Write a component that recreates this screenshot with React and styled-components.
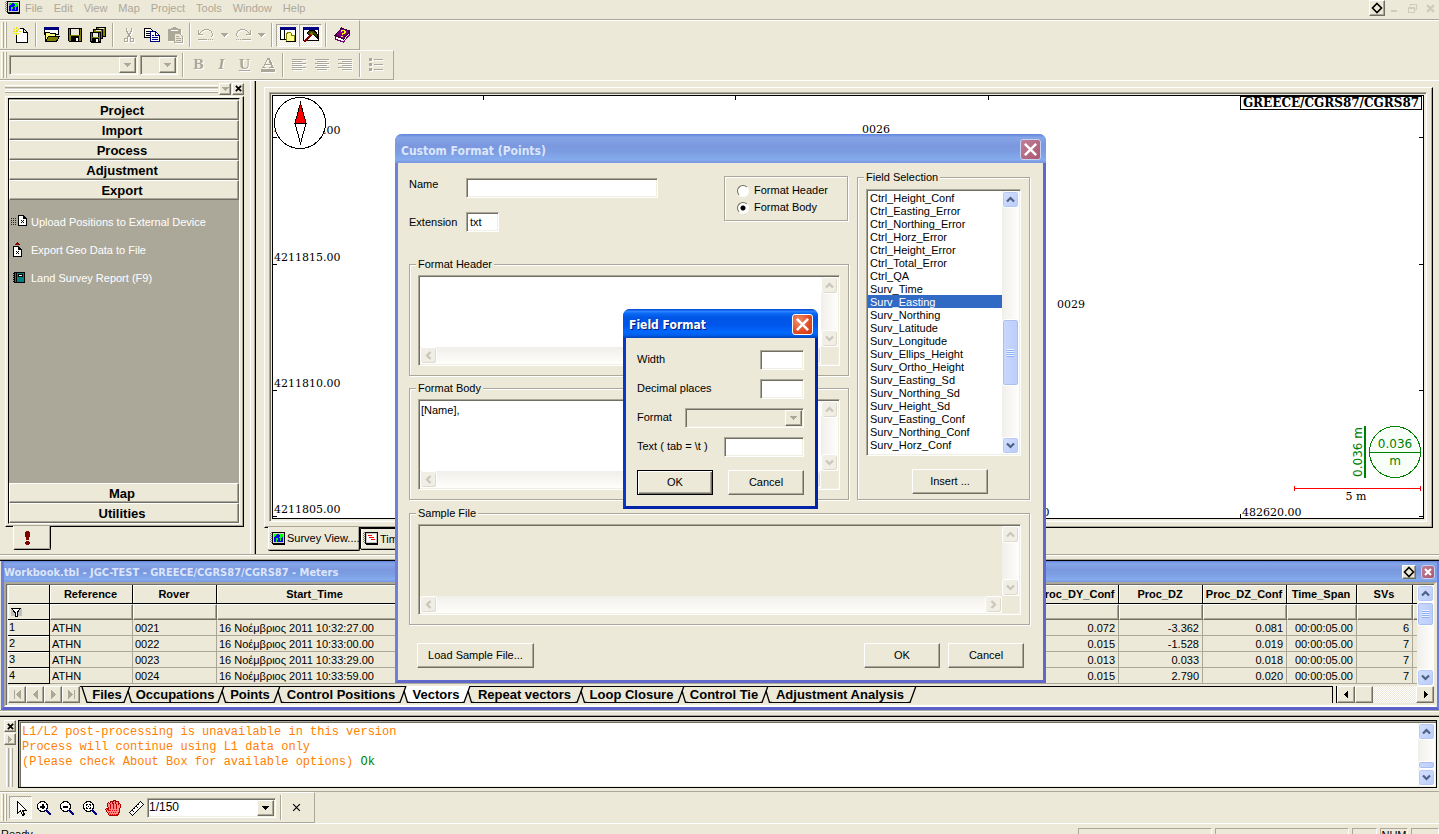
import React from "react";
import styled, { createGlobalStyle, css } from "styled-components";

const face = "#ece9d8";
const shade = "#aca899";
const dark = "#716f64";
const ui = '"Liberation Sans", Arial, sans-serif';
const caption = '"DejaVu Sans Condensed", "DejaVu Sans", sans-serif';

const raised = css`
  border: 1px solid;
  border-color: #fff ${dark} ${dark} #fff;
  box-shadow: inset -1px -1px 0 ${shade};
`;
const sunken = css`
  border: 1px solid;
  border-color: ${shade} #fff #fff ${shade};
  box-shadow: inset 1px 1px 0 ${dark}, inset -1px -1px 0 #f1efe2;
`;
const etched = css`
  border: 1px solid ${shade};
  box-shadow: 1px 1px 0 #fff, inset 1px 1px 0 #fff;
`;
const dither = css`
  background: repeating-conic-gradient(#fff 0 25%, ${face} 0 50%) 0 0 / 2px 2px;
`;

const GlobalStyle = createGlobalStyle`
  *, *::before, *::after { box-sizing: border-box; }
  html, body { margin: 0; height: 100%; overflow: hidden; background: ${face}; }
  body, button, input, select, textarea { font: 11px/13px ${ui}; color: #000; }
  button, input, select, textarea { margin: 0; padding: 0; border-radius: 0; outline: 0; }
  button { background: ${face}; border: 0; }
  ul { list-style: none; margin: 0; padding: 0; }
  svg { display: block; flex: none; }
`;

/* ---------- application shell ---------- */

const Shell = styled.div`
  height: 100vh;
  display: flex;
  flex-direction: column;
  background: ${face};
`;

const MenuBar = styled.header`
  flex: none;
  height: 20px;
  padding-left: 5px;
  display: flex;
  align-items: flex-start;
  border-bottom: 1px solid ${shade};
  box-shadow: 0 1px 0 #fff;
`;

const MenuList = styled.nav`
  display: flex;
  gap: 11px;
  margin-left: 4px;
  flex: 1;
`;

const MenuItem = styled.button`
  height: 16px;
  color: ${shade};
`;

const DocButtons = styled.div`
  display: flex;
`;

const PinButton = styled.button`
  ${raised}
  width: ${(p) => p.$size || 16}px;
  height: ${(p) => p.$size || 16}px;
  display: grid;
  place-items: center;
`;

const GhostButton = styled.button`
  width: 18px;
  height: 16px;
  display: grid;
  place-items: center;
`;

/* ---------- tool bars ---------- */

const ToolBar = styled.div`
  align-self: flex-start;
  flex: none;
  height: ${(p) => p.$height || 29}px;
  padding: 0 6px 0 1px;
  display: flex;
  align-items: center;
  border-right: 1px solid ${shade};
  border-bottom: 1px solid ${shade};
  border-top: 1px solid #fff;
`;

const Grip = styled.span`
  align-self: stretch;
  width: 6px;
  margin: 1px 2px 1px 0;
  border: solid #fff;
  border-width: 0 0 0 1px;
  background: linear-gradient(90deg, ${face} 1px, ${shade} 1px 2px, ${face} 2px 3px, #fff 3px 4px, ${face} 4px 5px);
  box-shadow: inset -1px 0 0 ${shade};
`;

const ToolButton = styled.button`
  width: 23px;
  height: 23px;
  display: grid;
  place-items: center;
  ${(p) =>
    p.$on &&
    css`
      ${dither}
      border: 1px solid;
      border-color: ${shade} #fff #fff ${shade};
    `}
  ${(p) =>
    p.$off &&
    css`
      color: ${shade};
      svg,
      span {
        filter: drop-shadow(1px 1px 0 #fff);
      }
    `}
`;

const DropButton = styled(ToolButton)`
  width: 14px;
`;

const Glyph = styled.span`
  font: ${(p) => (p.$italic ? "italic " : "")}bold 13px/16px "DejaVu Serif", serif;
  text-decoration: ${(p) => (p.$under ? "underline" : "none")};
`;

const Divider = styled.span`
  align-self: stretch;
  width: 8px;
  margin: 2px 0;
  background: linear-gradient(90deg, ${face} 3px, ${shade} 3px 4px, #fff 4px 5px, ${face} 5px);
`;

const ComboBox = styled.span`
  ${sunken}
  display: flex;
  flex: none;
  width: ${(p) => p.$width}px;
  height: ${(p) => p.$height || 20}px;
  margin-right: ${(p) => p.$gap || 0}px;
  padding: 1px;
  background: ${(p) => (p.$off ? face : "#fff")};
  select {
    flex: 1;
    min-width: 0;
    appearance: none;
    border: 0;
    background: transparent;
    font-size: 12px;
    opacity: 1;
    color: #000;
  }
`;

const ComboArrow = styled.span`
  ${raised}
  width: 17px;
  display: grid;
  place-items: center;
  background: ${face};
  color: ${(p) => (p.$off ? shade : "#000")};
`;

const Combo = ({ label, width, height, gap, off, value }) => (
  <ComboBox $width={width} $height={height} $gap={gap} $off={off}>
    <select aria-label={label} disabled={off}>
      <option>{value}</option>
    </select>
    <ComboArrow $off={off}>
      <DownTriangle />
    </ComboArrow>
  </ComboBox>
);

/* ---------- icons ---------- */

const Art = ({ w = 16, h = 16, children }) => (
  <svg width={w} height={h} viewBox={`0 0 ${w} ${h}`} shapeRendering="crispEdges" fill="none" aria-hidden="true">
    {children}
  </svg>
);

const DownTriangle = () => (
  <Art w={7} h={4}>
    <path d="M0 0h7v1H6v1H5v1H4v1H3V3H2V2H1V1H0z" fill="currentColor" />
  </Art>
);

const GlobeIcon = () => (
  <Art>
    <path d="M0 2h1v1H0zM0 4h1v1H0zM0 6h1v1H0zM0 8h1v1H0zM0 10h1v1H0zM1 1h1v1H1zM1 3h1v1H1zM1 5h1v1H1zM1 7h1v1H1zM1 9h1v1H1zM1 11h1v1H1z" fill="#808080" />
    <path d="M2 1h13v13H3v-1H2z" fill="#000" />
    <path d="M3 2h11v10H3z" fill="#d4d0c8" />
    <path d="M4 3h9v8H4z" fill="#00f" />
    <path d="M4 3h3v1H6v1H5v1H4zM9 3h4v3h-1v1h-1v3h-1V7H9V6h1V4H9zM6 7h2v2H7v2H6z" fill="#0f0" />
  </Art>
);

const PlanIcon = () => (
  <Art>
    <path d="M0 2h1v1H0zM0 4h1v1H0zM0 6h1v1H0zM0 8h1v1H0zM0 10h1v1H0zM1 1h1v1H1zM1 3h1v1H1zM1 5h1v1H1zM1 7h1v1H1zM1 9h1v1H1zM1 11h1v1H1z" fill="#808080" />
    <path d="M2 1h13v13H3v-1H2z" fill="#000" />
    <path d="M3 2h11v10H3z" fill="#c8c4bc" />
    <path d="M4 3h9v8H4z" fill="#fff" />
    <path d="M5 4h4v1H5zM6 6h5v1H6zM8 8h4v1H8z" fill="#f00" />
  </Art>
);

const NewIcon = () => (
  <Art>
    <path d="M3 8l4-6h3v4h4v9H4z" fill="#fff" />
    <path d="M3.500 8v7.500h11V5.500l-4-4H7" stroke="#000" />
    <path d="M10.500 1.500v4h4" stroke="#000" />
    <path d="M0 1h1v1H0zM1 2h1v1H1zM3 0h1v2H3zM6 1h1v1H6zM5 2h1v1H5zM0 4h2v1H0zM3 3h2v2H3zM6 4h2v1H6zM1 6h1v1H1zM3 6h1v2H3zM5 6h1v1H5z" fill="#e8e000" />
  </Art>
);

const OpenIcon = () => (
  <Art>
    <path d="M.5.500h14v7H.500z" fill="#fff" stroke="#000" />
    <path d="M0 0h15v3H0z" fill="#000080" />
    <path d="M1.500 14.500V5.500h4l1 1h5v3" fill="#ffff80" stroke="#000" />
    <path d="M1.500 14.500l3-5h11l-3 5z" fill="#808000" stroke="#000" />
  </Art>
);

const SaveIcon = () => (
  <Art>
    <path d="M1 1h14v14H2l-1-1z" fill="#000" />
    <path d="M2 2h1v12H2zM13 3h1v11h-1zM3 8h10v1H3zM3 9h1v5H3zM12 9h1v5h-1zM13 2h1v1h-1z" fill="#808000" />
    <path d="M4 2h8v6H4z" fill={face} />
    <path d="M9 11h2v3H9z" fill="#fff" />
  </Art>
);

const SaveAllIcon = () => (
  <Art>
    <path d="M6 0h10v10H6z" fill="#000" />
    <path d="M7 1h8v8H7z" fill="#808000" />
    <path d="M9 1h5v1H9z" fill={face} />
    <path d="M3 2h10v10H3z" fill="#000" />
    <path d="M4 3h8v8H4z" fill="#808000" />
    <path d="M6 3h5v1H6z" fill={face} />
    <path d="M0 5h11v11H1l-1-1z" fill="#000" />
    <path d="M1 6h1v8H1zM9 6h1v8H9zM2 10h7v1H2z" fill="#808000" />
    <path d="M3 6h5v4H3z" fill={face} />
    <path d="M6 12h2v3H6z" fill="#fff" />
  </Art>
);

const CutIcon = () => (
  <Art>
    <path d="M5 1h1v4H5zM10 1h1v4h-1zM6 4h1v3H6zM9 4h1v3H9zM7 6h2v4H7zM6 9h1v2H6zM9 9h1v2H9z" fill="currentColor" />
    <path d="M3.500 11.500h3v3h-3zM9.500 11.500h3v3h-3z" stroke="currentColor" />
  </Art>
);

const CopyIcon = () => (
  <Art>
    <path d="M.5 1.500h6l3 3v6H.500z" fill="#fff" stroke="#000" />
    <path d="M2 4h4v1H2zM2 6h5v1H2zM2 8h4v1H2z" fill="#000" />
    <path d="M6.500 4.500h5l4 4v6h-9z" fill="#fff" stroke="#000080" />
    <path d="M8 8h2v1H8zM8 10h6v1H8zM8 12h6v1H8z" fill="#000080" />
    <path d="M11.500 5v3.500H15" stroke="#000080" />
  </Art>
);

const PasteIcon = () => (
  <Art>
    <path d="M1 2h3V1h2V0h3v1h2v1h3v12H1z" fill="currentColor" />
    <path d="M4 3h7v1H4z" fill="#fff" />
    <path d="M7.500 6.500h5l3 3v6h-8z" fill={face} stroke="currentColor" />
    <path d="M9 9h3v1H9zM9 11h5v1H9zM9 13h5v1H9z" fill="currentColor" />
  </Art>
);

const UndoIcon = ({ flip }) => (
  <Art>
    <g transform={flip ? "translate(16 0) scale(-1 1)" : undefined}>
      <path d="M0 3h1v4h4v1H0zM1 6h1v1H1zM2 5h1v1H2zM3 4h1v1H3zM4 3h2v1H4zM6 2h5v1H6zM11 3h2v1h-2zM13 4h1v2h-1zM14 6h1v3h-1zM13 9h1v1h-1zM0 12h9v1H0zM10 12h1v1h-1zM12 12h1v1h-1zM14 12h1v1h-1z" fill="currentColor" />
    </g>
  </Art>
);

const BrowserPanelIcon = () => (
  <Art>
    <path d="M.500.500h15v12H.500z" fill="#fff" stroke="#000" />
    <path d="M0 0h16v3H0z" fill="#000080" />
    <path d="M4 3h1v10H4z" fill="#000" />
    <path d="M6.500 13.500v-7h1v-1h3l1 1v2h3v6h-8z" fill="#ffff90" stroke="#808000" />
    <path d="M6 14h10v1H6zM15 8h1v7h-1z" fill="#000" />
  </Art>
);

const HammerIcon = () => (
  <Art>
    <path d="M.500.500h15v13H.500z" fill="#fff" stroke="#000" />
    <path d="M0 0h16v3H0z" fill="#000080" />
    <path d="M4 6l3-3h4l3 4v4l-4-4-3 2z" fill="#404000" stroke="#000" />
    <path d="M9 7l-8 8" stroke="#800000" strokeWidth="2" />
    <path d="M8 6l2 2" stroke="#808000" strokeWidth="2" />
  </Art>
);

const HelpBookIcon = () => (
  <Art>
    <path d="M1 8.500L7.500 1l8 3-6 7.500z" fill="#800080" stroke="#400040" />
    <path d="M1 9l8.500 3 6-7.500v3l-6 7.500L1 12z" fill="#fff" stroke="#400040" />
    <path d="M1.500 12.500l8 2.500 6-7" stroke="#800080" />
    <path d="M7 3h4v1h1v2h-1v1H9v1H8V6h2V4H8v1H7zM7 9h2v1H7z" fill="#ff0" />
  </Art>
);

const AlignIcon = ({ lines }) => (
  <Art>
    {lines.map(([x, w], i) => (
      <rect key={i} x={x} y={2 + i * 2} width={w} height="1" fill="currentColor" />
    ))}
  </Art>
);

const BulletIcon = () => (
  <Art>
    <path d="M1 1h3v3H1zM1 6h3v3H1zM1 11h3v3H1zM6 2h9v1H6zM6 7h9v1H6zM6 12h9v1H6z" fill="currentColor" />
  </Art>
);

const FontColorIcon = () => (
  <Art>
    <path d="M8 1L3.500 10M5 7h6M2 10.500h4M9 10.500h5" stroke="currentColor" />
    <path d="M8 1l4 9M9 1l4 9" stroke="currentColor" />
    <path d="M1 12h14v3H1z" fill="currentColor" />
  </Art>
);

const PointerIcon = () => (
  <Art>
    <path d="M4.500 1.500v12l3-3 2 5 2-1-2-4h4z" fill="#fff" stroke="#000" />
  </Art>
);

const LensIcon = ({ kind }) => (
  <Art>
    <circle cx="6.500" cy="6.500" r="5" stroke="#000" fill="#fff" />
    <path d="M10 10l5 5" stroke="#000080" strokeWidth="2" />
    {kind !== "fit" && <path d="M4 6h5v1.500H4z" fill="#000" />}
    {kind === "in" && <path d="M6 4h1.500v5H6z" fill="#000" />}
    {kind === "fit" && <path d="M4 4h2v1H5v1H4zM7 4h2v2H8V5H7zM4 7h1v1h1v1H4zM8 7h1v2H7V8h1zM6 6h1v1H6z" fill="#000" />}
  </Art>
);

const HandIcon = () => (
  <Art>
    <path d="M4.500 15.500L.500 9.500l1-1 2 1-1-6 1-1 1.500 1 .5-2.500h1.500L7.500 3 8.500.500h1.500L10.500 3l1-1.500h1.500v3l1-1 1.500 1-1 7-2 4z" fill="#f88" stroke="#a00" />
    <path d="M5 4v5M8 3v6M11 4v5M4 11l2-1" stroke="#c00" />
    <path d="M4 12h8M3 10h10M5 14h7" stroke="#e00" strokeDasharray="1 1" />
  </Art>
);

const RulerIcon = () => (
  <Art>
    <path d="M1.500 12.500l11-11 3 3-11 11z" fill="#fff" stroke="#000" />
    <path d="M4 10l2 2M6 8l1 1M8 6l2 2M10 4l1 1" stroke="#000" />
  </Art>
);

const UploadIcon = () => (
  <Art>
    <path d="M0 4h1v1H0zM2 4h1v1H2zM4 4h1v1H4zM0 6h1v1H0zM2 6h1v1H2zM4 6h1v1H4zM0 8h1v1H0zM2 8h1v1H2zM4 8h1v1H4zM0 10h1v1H0zM2 10h1v1H2zM4 10h1v1H4z" fill="#800000" />
    <path d="M7.500 1.500h5l3 3v7h-8z" fill="#fff" stroke="#000" />
    <path d="M12 2v3h3M10 6h1v1h1V6h1v1h-1v1h1v1h-1V8h-1v1h-1V8h1V7h-1z" fill="#000" />
  </Art>
);

const ExportIcon = () => (
  <Art>
    <path d="M6 0h1v1h1v1h1v1H4V2h1V1h1z" fill="#800000" />
    <path d="M2.500 4.500h5l3 3v7h-8z" fill="#fff" stroke="#000" />
    <path d="M7 5v3h3M5 9h1v1h1V9h1v1H7v1h1v1H7v-1H6v1H5v-1h1v-1H5z" fill="#000" />
  </Art>
);

const ReportIcon = () => (
  <Art>
    <path d="M3.500 2.500h10v10h-10z" fill="#008080" stroke="#000" />
    <path d="M2 3h1v1H2zM2 5h1v1H2zM2 7h1v1H2zM2 9h1v1H2zM2 11h1v1H2zM5 3h1v9H5z" fill="#000" />
    <path d="M7 4h5v3H7z" fill="#000" />
    <path d="M8 5h3v1H8z" fill="#fff" />
  </Art>
);

const FilterIcon = () => (
  <Art w={13} h={10}>
    <path d="M1 1h11v8H1z" fill="#c0c0c0" />
    <path d="M1.500 1.500h9l-3.500 4v4h-2v-4z" fill="#fff" stroke="#000" />
  </Art>
);

const CrossIcon = ({ size = 8, color = "#000", weight = 2 }) => (
  <svg width={size} height={size} viewBox="0 0 8 8" aria-hidden="true">
    <path d="M1 1l6 6M7 1l-6 6" stroke={color} strokeWidth={weight} />
  </svg>
);

const DiamondIcon = () => (
  <svg width="12" height="12" viewBox="0 0 12 12" fill="none" aria-hidden="true">
    <path d="M6 1.500L10.500 6 6 10.500 1.500 6z" stroke="#000" strokeWidth="1.600" />
  </svg>
);

/* ---------- scroll bars ---------- */

const turns = { up: 0, right: 90, down: 180, left: 270 };

const Chevron = ({ to }) => (
  <svg width="9" height="9" viewBox="0 0 9 9" fill="none" aria-hidden="true">
    <path d="M1 6.500L4.500 3 8 6.500" stroke="currentColor" strokeWidth="2.200" transform={`rotate(${turns[to]} 4.500 4.500)`} />
  </svg>
);

const Track = styled.div`
  flex: none;
  display: flex;
  flex-direction: ${(p) => (p.$flat ? "row" : "column")};
  ${(p) => (p.$flat ? "height: 17px;" : "width: 17px;")}
  background: linear-gradient(${(p) => (p.$flat ? "180deg" : "90deg")}, #f1efea, #fefefb);
`;

const Arrow = styled.button`
  flex: none;
  width: 17px;
  height: 17px;
  display: grid;
  place-items: center;
  border: 1px solid #fff;
  border-radius: 3px;
  ${(p) =>
    p.$off
      ? css`
          color: #c9c7ba;
          background: #f0eee5;
          box-shadow: inset -1px -1px 0 #dddacb;
        `
      : css`
          color: #4d6185;
          background: linear-gradient(135deg, #d6e1fe, #b8cbf8);
          box-shadow: inset 0 0 0 1px #b7c9f5;
        `}
`;

const Rest = styled.span`
  flex: ${(p) => p.$share} 1 0;
`;

const Thumb = styled.span`
  flex: none;
  height: ${(p) => p.$length}px;
  border: 1px solid #fff;
  border-radius: 3px;
  box-shadow: inset 0 0 0 1px #a9bff0;
  background: linear-gradient(90deg, #cad8fd, #bbcdfb);
  display: grid;
  place-items: center;
`;

const ThumbRidges = styled.i`
  width: 7px;
  height: 8px;
  background: repeating-linear-gradient(#eef4fe 0 1px, #8cb0f8 1px 2px);
`;

const VScroll = ({ off, before = 0, after = 1, thumb }) => (
  <Track>
    <Arrow type="button" $off={off} aria-label="Scroll up"><Chevron to="up" /></Arrow>
    <Rest $share={before} />
    {thumb && <Thumb $length={thumb}>{thumb > 12 && <ThumbRidges />}</Thumb>}
    <Rest $share={after} />
    <Arrow type="button" $off={off} aria-label="Scroll down"><Chevron to="down" /></Arrow>
  </Track>
);

const HScroll = () => (
  <Track $flat>
    <Arrow type="button" $off aria-label="Scroll left"><Chevron to="left" /></Arrow>
    <Rest $share={1} />
    <Arrow type="button" $off aria-label="Scroll right"><Chevron to="right" /></Arrow>
  </Track>
);

/* ---------- work area ---------- */

const Work = styled.main`
  flex: 1;
  min-height: 0;
  display: flex;
  border-top: 1px solid #fff;
`;

const Side = styled.aside`
  flex: none;
  width: 257px;
  padding: 1px 13px 0 5px;
  display: flex;
  flex-direction: column;
  background: linear-gradient(90deg, ${face} 250px, #fff 250px 251px, ${face} 251px 254px, ${shade} 254px 255px, #000 255px 256px, ${face} 256px);
`;

const SideHead = styled.div`
  display: flex;
  align-items: center;
  gap: 1px;
  height: 13px;
`;

const SideGrip = styled.span`
  flex: 1;
  height: 7px;
  border: solid #fff;
  border-width: 1px 0;
  background: linear-gradient(${face} 1px, ${shade} 1px 2px, #fff 3px 4px, ${face} 4px);
  box-shadow: 0 1px 0 ${shade};
`;

const TinyButton = styled.button`
  ${raised}
  width: 12px;
  height: 12px;
  display: grid;
  place-items: center;
  color: ${shade};
`;

const SidePanel = styled.div`
  flex: 1;
  min-height: 0;
  margin-top: 1px;
  padding: 1px 3px 2px 2px;
  display: flex;
  border: 1px solid;
  border-color: #fff #000 #000 #fff;
  box-shadow: inset -1px -1px 0 ${shade};
`;

const Drawers = styled.div`
  flex: 1;
  display: flex;
  flex-direction: column;
  border: 1px solid;
  border-color: #000 #fff #fff #000;
  background: ${shade};
  padding-top: 1px;
`;

const Drawer = styled.button`
  ${raised}
  flex: none;
  height: 20px;
  padding: 1px 4px 0 0;
  font-weight: bold;
  font-size: 13px;
  line-height: 16px;
`;

const DrawerBody = styled.ul`
  flex: 1;
  padding: 14px 0 0 2px;
`;

const DrawerLink = styled.a`
  display: flex;
  align-items: center;
  gap: 4px;
  height: 16px;
  margin-bottom: 12px;
  color: #fff;
  text-decoration: none;
`;

const SideTab = styled.button`
  flex: none;
  width: 38px;
  height: 24px;
  margin: -1px 0 4px 8px;
  padding-right: 10px;
  border: solid;
  border-width: 0 1px 1px;
  border-color: #000 #000 #000 #fff;
  border-radius: 0 0 2px 2px;
  box-shadow: inset -1px -1px 0 ${shade};
  display: grid;
  place-items: center;
`;

const ViewArea = styled.section`
  flex: 1;
  min-width: 0;
  display: flex;
  flex-direction: column;
  padding: 6px 6px 2px 7px;
`;

const ViewFrame = styled.div`
  flex: 1;
  min-height: 0;
  display: flex;
  padding: 4px 5px 5px 4px;
  border: 1px solid;
  border-color: #fff #000 #000 #fff;
  box-shadow: inset -1px -1px 0 ${shade};
`;

const ViewWell = styled.div`
  ${sunken}
  flex: 1;
  display: flex;
  padding: 2px;
`;

const MapCanvas = styled.div`
  position: relative;
  flex: 1;
  overflow: hidden;
  border: 1px solid #000;
  background: #fff;
`;

const MapLabel = styled.span`
  position: absolute;
  left: ${(p) => p.$x}px;
  top: ${(p) => p.$y}px;
  font: 11px/14px "DejaVu Serif", serif;
`;

const SideTick = styled.i`
  position: absolute;
  ${(p) => (p.$right ? "right: 0;" : "left: 0;")}
  top: ${(p) => p.$y}px;
  width: 4px;
  height: 1px;
  background: #000;
`;

const EdgeTick = styled.i`
  position: absolute;
  ${(p) => (p.$bottom ? "bottom: 0;" : "top: 0;")}
  left: ${(p) => p.$x}px;
  width: 1px;
  height: 4px;
  background: #000;
`;

const Compass = styled.div`
  position: absolute;
  left: 0;
  top: 0;
`;

const DatumTag = styled.div`
  position: absolute;
  right: 1px;
  top: 0;
  width: 182px;
  height: 14px;
  border: 1px solid #000;
  background: #fff;
  text-align: center;
  font: bold 12px/12px "DejaVu Serif", serif;
  white-space: nowrap;
`;

const ErrorLegend = styled.div`
  position: absolute;
  right: 1px;
  bottom: 13px;
`;

const ViewTabs = styled.div`
  flex: none;
  display: flex;
  height: 25px;
  padding: 0 0 0 4px;
  margin-top: -1px;
`;

const ViewTab = styled.button`
  height: ${(p) => (p.$active ? 24 : 22)}px;
  width: 92px;
  margin-top: ${(p) => (p.$active ? 0 : 1)}px;
  padding: 0 1px 0 2px;
  display: flex;
  align-items: center;
  gap: 1px;
  overflow: hidden;
  white-space: nowrap;
  border: solid #000;
  border-width: ${(p) => (p.$active ? "0 1px 1px 0" : "1px")};
  border-radius: 0 0 2px 2px;
  box-shadow: inset 1px 0 0 #fff, inset -1px -1px 0 ${shade};
`;

const Splitter = styled.div`
  flex: none;
  height: 7px;
  border-top: 1px solid ${shade};
  border-bottom: 1px solid #000;
  box-shadow: inset 0 1px 0 #fff, inset 0 -1px 0 ${shade};
`;

/* ---------- workbook ---------- */

const inactiveCaption = "linear-gradient(#5f85dc, #86a5e8 12%, #7b98df 40%, #7c9ce2 60%, #84abec 88%, #7a96df)";
const activeCaption =
  "linear-gradient(#0040d0, #2a84ff 8%, #0a68f4 16%, #0055e5 30%, #0056ec 56%, #0068fe 80%, #0060ec 90%, #0042b8)";

const Workbook = styled.section`
  flex: none;
  margin-left: 1px;
  border: solid #6f80dc;
  border-width: 0 2px 3px 3px;
  border-bottom-color: #5a62c8;
`;

const WorkbookTitle = styled.div`
  height: 21px;
  padding-right: 2px;
  display: flex;
  align-items: center;
  gap: 5px;
  background: ${inactiveCaption};
  color: #dce6fa;
  h2 {
    flex: 1;
    margin: 0;
    padding-top: 2px;
    font: bold 11px/18px ${caption};
  }
`;

const CloseBox = styled.button`
  width: ${(p) => p.$size}px;
  height: ${(p) => p.$size}px;
  display: grid;
  place-items: center;
  border: 1px solid #fff;
  border-radius: 3px;
  border-color: ${(p) => (p.$active ? "#fff" : "#c8d0f0")};
  background: ${(p) => (p.$active ? "radial-gradient(circle at 30% 30%, #f0906a, #e04a24 60%, #cc3810)" : "linear-gradient(135deg, #c08098, #a85870)")};
`;

const SheetWell = styled.div`
  ${sunken}
  border-width: 2px 3px 2px 2px;
  border-color: ${shade} ${face} #fff ${shade};
  padding: 1px 0 1px 2px;
`;

const SheetRow = styled.div`
  display: flex;
  height: 101px;
`;

const SheetScroll = styled.div`
  flex: 1;
  min-width: 0;
  overflow: hidden;
`;

const Grid = styled.table`
  table-layout: fixed;
  width: 1412px;
  border-collapse: separate;
  border-spacing: 0;
  th,
  td {
    padding: 0 3px 0 2px;
    overflow: hidden;
    white-space: nowrap;
  }
`;

const HeadCell = styled.th`
  height: 19px;
  border: solid #000;
  border-width: 0 1px 1px 0;
  box-shadow: inset 1px 1px 0 #fff, inset -1px 0 0 ${face};
  font-size: 11px;
  font-weight: bold;
`;

const FilterCell = styled.td`
  height: 16px;
  ${raised}
`;

const RowHead = styled.th`
  height: 16px;
  border: solid #000;
  border-width: 0 1px 1px 0;
  box-shadow: inset 1px 1px 0 #fff;
  text-align: left;
  font-weight: normal;
  && {
    padding: 0 ${(p) => (p.$filter ? 2 : 1)}px;
  }
`;

const Cell = styled.td`
  height: 16px;
  border: solid ${shade};
  border-width: 0 1px 1px 0;
  line-height: 14px;
  text-align: ${(p) => (p.$num ? "right" : "left")};
`;

const SheetFoot = styled.div`
  display: flex;
  height: 18px;
`;

const NavButton = styled.button`
  ${raised}
  flex: none;
  width: 18px;
  height: 17px;
  display: grid;
  place-items: center;
  color: ${shade};
`;

const SheetTabs = styled.div`
  flex: 1;
  min-width: 0;
  display: flex;
  height: 17px;
  overflow: hidden;
  border-right: 1px solid #000;
  background: linear-gradient(#000 1px, ${face} 1px);
`;

const SheetTab = styled.button`
  flex: none;
  width: ${(p) => p.$width}px;
  height: 17px;
  background: ${(p) => (p.$active ? "#fff" : face)};
  border: solid #000;
  border-width: ${(p) => (p.$active ? 0 : 1)}px 0 1px;
  font-weight: bold;
  font-size: 13px;
  line-height: 15px;
  white-space: nowrap;
`;

const HMini = styled.div`
  flex: none;
  width: 98px;
  height: 17px;
  margin-left: 3px;
  display: flex;
  ${dither}
  border-left: 1px solid #000;
  span {
    flex: 1;
  }
`;

const Slant = ({ leftOn, rightOn, first, last }) => (
  <svg width="12" height="17" viewBox="0 0 12 17" fill="none" aria-hidden="true">
    {leftOn && <path d="M0 0h8L2.500 17H0z" fill="#fff" />}
    {rightOn && <path d="M8 0h4v17H9.500L6 5z" fill="#fff" />}
    {!first && <path d="M0 16.500h2L8 0" stroke="#000" strokeWidth="1.300" />}
    {!last && <path d={first ? "M2 1l5 15.500h5" : "M6 5l3.500 11.500H12"} stroke="#000" strokeWidth="1.300" />}
  </svg>
);

/* ---------- message log ---------- */

const Log = styled.section`
  flex: none;
  height: 75px;
  padding: 3px 2px 3px 4px;
  display: flex;
  gap: 2px;
  border-bottom: 1px solid ${shade};
`;

const LogHandle = styled.div`
  width: 12px;
  display: flex;
  flex-direction: column;
  gap: 1px;
`;

const LogGrip = styled.span`
  flex: 1;
  width: 7px;
  margin: 2px 0 1px 2px;
  border-left: 1px solid #fff;
  background: linear-gradient(90deg, ${face} 1px, ${shade} 1px 2px, #fff 3px 4px, ${face} 4px);
  box-shadow: inset -1px 0 0 ${shade};
`;

const LogWell = styled.div`
  flex: 1;
  min-width: 0;
  display: flex;
  padding: 2px 1px 1px 2px;
  border: 1px solid #000;
  box-shadow: inset 1px 1px 0 ${shade}, inset 2px 2px 0 ${dark}, inset -1px -1px 0 #f1efe2;
  background: #fff;
`;

const LogText = styled.div`
  flex: 1;
  padding: 2px 1px;
  color: #ff8000;
  font: 12px/15px "Liberation Mono", "Courier New", monospace;
  p {
    margin: 0;
  }
  b {
    font-weight: normal;
    color: #008000;
  }
`;

/* ---------- status bar ---------- */

const StatusBar = styled.footer`
  flex: none;
  height: 20px;
  margin-bottom: -9px;
  padding: 4px 0 0 1px;
  display: flex;
  gap: 3px;
  border-top: 1px solid #fff;
`;

const StatusText = styled.span`
  flex: 1;
`;

const StatusPane = styled.span`
  width: ${(p) => p.$width}px;
  height: 15px;
  border: 1px solid;
  border-color: ${shade} #fff #fff ${shade};
  text-align: center;
`;

/* ---------- dialogs ---------- */

const DialogLayer = styled.div`
  position: fixed;
  inset: 0 0 17px 2px;
  display: grid;
  place-items: center;
`;

const Dialog = styled.section`
  width: ${(p) => p.$width}px;
  border: solid ${(p) => (p.$active ? "#0838c8" : "#6f80dc")};
  border-width: 0 3px 3px;
  border-right-color: ${(p) => (p.$active ? "#0024a8" : "#6068cc")};
  border-bottom-color: ${(p) => (p.$active ? "#0024a8" : "#6068cc")};
  border-radius: 7px 7px 0 0;
  background: ${face};
`;

const DialogTitle = styled.header`
  height: 29px;
  margin: 0 -3px;
  padding: 2px 5px 0 6px;
  display: flex;
  align-items: center;
  border-radius: 7px 7px 0 0;
  background: ${(p) => (p.$active ? activeCaption : inactiveCaption)};
  color: ${(p) => (p.$active ? "#fff" : "#dce6fa")};
  text-shadow: ${(p) => (p.$active ? "1px 1px 0 #002080" : "none")};
  h2 {
    flex: 1;
    margin: 0;
    padding-top: 2px;
    font: bold 12px/18px ${caption};
  }
`;

const PushButton = styled.button`
  ${raised}
  width: ${(p) => p.$width || 76}px;
  height: 25px;
  ${(p) =>
    p.$default &&
    css`
      border-color: #000;
      box-shadow: inset 1px 1px 0 #fff, inset -1px -1px 0 ${dark}, inset -2px -2px 0 ${shade};
    `}
`;

const TextField = styled.input`
  ${sunken}
  width: ${(p) => p.$width}px;
  height: 20px;
  padding: 0 3px;
  background: #fff;
`;

const FormatBody = styled.form`
  padding: 8px 13px 12px 11px;
`;

const Columns = styled.div`
  display: flex;
  gap: 8px;
`;

const MainColumn = styled.div`
  flex: 1;
  min-width: 0;
  display: flex;
  flex-direction: column;
  gap: 6px;
`;

const TopFields = styled.div`
  display: flex;
  justify-content: space-between;
  align-items: flex-start;
  height: 81px;
  padding-top: 5px;
`;

const NameGrid = styled.div`
  display: grid;
  grid-template-columns: 49px auto;
  gap: 14px 8px;
  padding-top: 2px;
  align-items: center;
`;

const TopLabel = styled.label`
  align-self: start;
`;

const RadioBox = styled.div`
  ${etched}
  width: 124px;
  height: 45px;
  margin-right: 1px;
  padding: 7px 0 0 12px;
  display: flex;
  flex-direction: column;
  gap: 4px;
`;

const RadioLabel = styled.label`
  display: flex;
  align-items: center;
  gap: 5px;
  height: 13px;
  input {
    appearance: none;
    width: 12px;
    height: 12px;
    border: 1px solid;
    border-color: ${dark} #fff #fff ${dark};
    border-radius: 50%;
    background: #fff;
  }
  input:checked {
    background: radial-gradient(circle, #000 2px, #fff 3px);
  }
`;

const Group = styled.fieldset`
  ${etched}
  margin: ${(p) => p.$top || 0}px 0 0;
  min-width: 0;
  width: ${(p) => (p.$width ? p.$width + "px" : "auto")};
  padding: 4px 8px 9px;
  legend {
    margin-left: -2px;
    padding: 0 2px;
    background: ${face};
  }
`;

const Pane = styled.div`
  ${sunken}
  display: grid;
  grid-template-columns: 1fr 17px;
  grid-template-rows: 1fr 17px;
  height: 91px;
  padding: 1px;
  background: ${face};
  textarea {
    border: 0;
    resize: none;
    overflow: hidden;
    width: 100%;
    height: 100%;
    padding: 3px 1px;
    background: ${(p) => (p.$off ? face : "#fff")};
  }
`;

const EditPane = ({ label, value, off }) => (
  <Pane $off={off}>
    <textarea aria-label={label} defaultValue={value} spellCheck={false} readOnly={off} />
    <VScroll off />
    <HScroll />
  </Pane>
);

const ListWell = styled.div`
  ${sunken}
  display: flex;
  height: 267px;
  margin-top: 1px;
  padding: 1px;
  background: #fff;
`;

const ListBox = styled.ul`
  flex: 1;
  overflow: hidden;
`;

const ListItem = styled.li`
  height: 13px;
  padding-left: 2px;
  line-height: 14px;
  color: ${(p) => (p.$picked ? "#fff" : "#000")};
  background: ${(p) => (p.$picked ? "#316ac5" : "transparent")};
`;

const InsertRow = styled.div`
  padding: 13px 0 0 46px;
  margin-bottom: -4px;
`;

const Actions = styled.div`
  display: flex;
  gap: 8px;
  margin-top: 18px;
  padding: 0 6px 0 8px;
  button:first-child {
    margin-right: auto;
  }
`;

const FieldBody = styled.form`
  display: flex;
  flex-direction: column;
  gap: 9px;
  padding: 12px 11px 11px 11px;
`;

const FieldRow = styled.div`
  display: flex;
  align-items: center;
  justify-content: space-between;
`;

const FieldActions = styled(FieldRow)`
  margin-top: 4px;
`;

/* ---------- data ---------- */

const menus = ["File", "Edit", "View", "Map", "Project", "Tools", "Window", "Help"];

const fields = [
  "Ctrl_Height_Conf", "Ctrl_Easting_Error", "Ctrl_Northing_Error", "Ctrl_Horz_Error", "Ctrl_Height_Error",
  "Ctrl_Total_Error", "Ctrl_QA", "Surv_Time", "Surv_Easting", "Surv_Northing", "Surv_Latitude", "Surv_Longitude",
  "Surv_Ellips_Height", "Surv_Ortho_Height", "Surv_Easting_Sd", "Surv_Northing_Sd", "Surv_Height_Sd",
  "Surv_Easting_Conf", "Surv_Northing_Conf", "Surv_Horz_Conf", "Surv_Height_Conf",
];

const columns = [
  [42, ""], [83, "Reference"], [84, "Rover"], [197, "Start_Time"], [61, ""], [112, ""], [84, ""], [112, ""],
  [84, ""], [84, ""], [84, ""], [84, "Proc_DY_Conf"], [84, "Proc_DZ"], [84, "Proc_DZ_Conf"], [70, "Time_Span"],
  [56, "SVs"], [7, ""],
];

const rows = [
  ["ATHN", "0021", "16 Νοέμβριος 2011 10:32:27.00", "0.072", "-3.362", "0.081", "00:00:05.00", "6"],
  ["ATHN", "0022", "16 Νοέμβριος 2011 10:33:00.00", "0.015", "-1.528", "0.019", "00:00:05.00", "7"],
  ["ATHN", "0023", "16 Νοέμβριος 2011 10:33:29.00", "0.013", "0.033", "0.018", "00:00:05.00", "7"],
  ["ATHN", "0024", "16 Νοέμβριος 2011 10:33:59.00", "0.015", "2.790", "0.020", "00:00:05.00", "7"],
];

const sheetTabs = [
  ["Files", 30], ["Occupations", 82], ["Points", 44], ["Control Positions", 114], ["Vectors", 52],
  ["Repeat vectors", 101], ["Loop Closure", 89], ["Control Tie", 72], ["Adjustment Analysis", 136],
];

const navShapes = [
  "M1 0h1v9H1zM8 0v9L3 4.500z",
  "M7 0v9L2 4.500z",
  "M2 0v9l5-4.500z",
  "M7 0h1v9H7zM1 0v9l5-4.500z",
];

const alignLeft = [[1, 14], [1, 10], [1, 14], [1, 10], [1, 14], [1, 10]];
const alignCenter = [[1, 14], [3, 10], [1, 14], [3, 10], [1, 14], [3, 10]];
const alignRight = [[1, 14], [5, 10], [1, 14], [5, 10], [1, 14], [5, 10]];

/* ---------- screen parts ---------- */

const SurveyMap = () => (
  <MapCanvas>
    <MapLabel $x={1} $y={28}>4211820.00</MapLabel>
    <MapLabel $x={1} $y={155}>4211815.00</MapLabel>
    <MapLabel $x={1} $y={281}>4211810.00</MapLabel>
    <MapLabel $x={1} $y={407}>4211805.00</MapLabel>
    {[41, 168, 294, 420].map((y) => (
      <React.Fragment key={y}>
        <SideTick $y={y} />
        <SideTick $right $y={y} />
      </React.Fragment>
    ))}
    {[210, 462, 715, 967].map((x) => (
      <React.Fragment key={x}>
        <EdgeTick $x={x} />
        <EdgeTick $bottom $x={x} />
      </React.Fragment>
    ))}
    <MapLabel $x={589} $y={27}>0026</MapLabel>
    <MapLabel $x={784} $y={202}>0029</MapLabel>
    <MapLabel $x={717} $y={410}>482615.00</MapLabel>
    <MapLabel $x={969} $y={410}>482620.00</MapLabel>
    <Compass>
      <svg width="56" height="56" viewBox="0 0 56 56" shapeRendering="crispEdges" aria-hidden="true">
        <circle cx="27" cy="27" r="25.500" fill="#fff" stroke="#000" />
        <path d="M27.500 7l-5.500 20h11z" fill="#f00" stroke="#000" />
        <path d="M22 27.500l5.500 20 5.500-20z" fill="#fff" stroke="#000" />
      </svg>
    </Compass>
    <DatumTag>GREECE/CGRS87/CGRS87</DatumTag>
    <ErrorLegend>
      <svg width="132" height="82" viewBox="0 0 132 82">
        <g shapeRendering="crispEdges" fill="none">
          <circle cx="105" cy="29" r="25.500" fill="#f8fff8" stroke="#008000" />
          <path d="M79 29.500h52" stroke="#008000" />
          <path d="M75 3v52" stroke="#008000" strokeWidth="2" />
          <path d="M4 65.500h126M4.500 63v5M130.500 63v5" stroke="#f00" />
        </g>
        <g fill="#008000" textAnchor="middle" fontSize="12" fontFamily="DejaVu Sans, sans-serif">
          <text x="105" y="25">0.036</text>
          <text x="105" y="42">m</text>
          <text transform="translate(72 29) rotate(-90)">0.036 m</text>
        </g>
        <text x="66" y="77" textAnchor="middle" fontSize="11" fontFamily="DejaVu Serif, serif">5 m</text>
      </svg>
    </ErrorLegend>
  </MapCanvas>
);

const WorkbookWindow = () => (
  <Workbook>
    <WorkbookTitle>
      <h2>Workbook.tbl - JGC-TEST - GREECE/CGRS87/CGRS87 - Meters</h2>
      <PinButton $size={14} aria-label="Float"><DiamondIcon /></PinButton>
      <CloseBox $size={14} aria-label="Close workbook"><CrossIcon color="#fff" /></CloseBox>
    </WorkbookTitle>
    <SheetWell>
      <SheetRow>
        <SheetScroll>
          <Grid>
            <colgroup>
              {columns.map(([w], i) => <col key={i} width={w} />)}
            </colgroup>
            <thead>
              <tr>{columns.map(([, name], i) => <HeadCell key={i} scope="col">{name}</HeadCell>)}</tr>
            </thead>
            <tbody>
              <tr>
                <RowHead $filter><FilterIcon /></RowHead>
                {columns.slice(1).map((c, i) => <FilterCell key={i} />)}
              </tr>
              {rows.map((r, n) => (
                <tr key={n}>
                  <RowHead scope="row">{n + 1}</RowHead>
                  {r.slice(0, 3).map((v) => <Cell key={v}>{v}</Cell>)}
                  {columns.slice(4, 11).map((c, i) => <Cell key={i} />)}
                  {r.slice(3).map((v, i) => <Cell key={i} $num>{v}</Cell>)}
                  <Cell />
                </tr>
              ))}
            </tbody>
          </Grid>
        </SheetScroll>
        <VScroll before={0} after={1} thumb={24} />
      </SheetRow>
      <SheetFoot>
        {navShapes.map((d) => (
          <NavButton key={d} aria-label="Move between sheets">
            <Art w={9} h={9}><path d={d} fill="currentColor" /></Art>
          </NavButton>
        ))}
        <SheetTabs>
          {sheetTabs.map(([name, w], i) => {
            const on = name === "Vectors";
            const afterOn = i > 0 && sheetTabs[i - 1][0] === "Vectors";
            return (
              <React.Fragment key={name}>
                <Slant first={i === 0} leftOn={afterOn} rightOn={on} />
                <SheetTab $width={w} $active={on}>{name}</SheetTab>
              </React.Fragment>
            );
          })}
          <Slant last />
        </SheetTabs>
        <HMini>
          <NavButton aria-label="Scroll left"><Art w={5} h={7}><path d="M4 0v7L0 3.500z" fill="#000" /></Art></NavButton>
          <NavButton aria-label="Scroll position" />
          <span />
          <NavButton aria-label="Scroll right"><Art w={5} h={7}><path d="M1 0v7l4-3.500z" fill="#000" /></Art></NavButton>
        </HMini>
      </SheetFoot>
    </SheetWell>
  </Workbook>
);

const CustomFormat = () => (
  <DialogLayer>
    <Dialog role="dialog" aria-label="Custom Format (Points)" $width={651}>
      <DialogTitle>
        <h2>Custom Format (Points)</h2>
        <CloseBox $size={21} aria-label="Close"><CrossIcon size={15} color="#fff" weight={1.3} /></CloseBox>
      </DialogTitle>
      <FormatBody onSubmit={(e) => e.preventDefault()}>
        <Columns>
          <MainColumn>
            <TopFields>
              <NameGrid>
                <TopLabel htmlFor="fmt-name">Name</TopLabel>
                <TextField id="fmt-name" $width={192} />
                <label htmlFor="fmt-ext">Extension</label>
                <TextField id="fmt-ext" $width={33} defaultValue="txt" />
              </NameGrid>
              <RadioBox role="radiogroup">
                <RadioLabel><input type="radio" name="part" />Format Header</RadioLabel>
                <RadioLabel><input type="radio" name="part" defaultChecked />Format Body</RadioLabel>
              </RadioBox>
            </TopFields>
            <Group>
              <legend>Format Header</legend>
              <EditPane label="Format Header" />
            </Group>
            <Group>
              <legend>Format Body</legend>
              <EditPane label="Format Body" value="[Name]," />
            </Group>
          </MainColumn>
          <Group $width={173}>
            <legend>Field Selection</legend>
            <ListWell>
              <ListBox role="listbox" aria-label="Field Selection">
                {fields.map((f) => {
                  const on = f === "Surv_Easting";
                  return <ListItem key={f} role="option" aria-selected={on} $picked={on}>{f}</ListItem>;
                })}
              </ListBox>
              <VScroll before={112} after={51} thumb={67} />
            </ListWell>
            <InsertRow><PushButton type="button">Insert ...</PushButton></InsertRow>
          </Group>
        </Columns>
        <Group $top={7}>
          <legend>Sample File</legend>
          <EditPane label="Sample File" off />
        </Group>
        <Actions>
          <PushButton type="button" $width={117}>Load Sample File...</PushButton>
          <PushButton type="button">OK</PushButton>
          <PushButton type="button">Cancel</PushButton>
        </Actions>
      </FormatBody>
    </Dialog>
  </DialogLayer>
);

const FieldFormat = () => (
  <DialogLayer>
    <Dialog role="dialog" aria-label="Field Format" $active $width={195}>
      <DialogTitle $active>
        <h2>Field Format</h2>
        <CloseBox $active $size={21} aria-label="Close"><CrossIcon size={15} color="#fff" weight={1.3} /></CloseBox>
      </DialogTitle>
      <FieldBody onSubmit={(e) => e.preventDefault()}>
        <FieldRow>
          <label htmlFor="f-width">Width</label>
          <TextField id="f-width" $width={44} />
        </FieldRow>
        <FieldRow>
          <label htmlFor="f-dec">Decimal places</label>
          <TextField id="f-dec" $width={44} />
        </FieldRow>
        <FieldRow>
          <span>Format</span>
          <Combo label="Format" width={119} off value="" />
        </FieldRow>
        <FieldRow>
          <label htmlFor="f-text">Text ( tab = \t )</label>
          <TextField id="f-text" $width={80} />
        </FieldRow>
        <FieldActions>
          <PushButton $default>OK</PushButton>
          <PushButton type="button">Cancel</PushButton>
        </FieldActions>
      </FieldBody>
    </Dialog>
  </DialogLayer>
);

export default function App() {
  return (
    <>
      <GlobalStyle />
      <Shell>
        <MenuBar>
          <GlobeIcon />
          <MenuList>
            {menus.map((m) => <MenuItem key={m}>{m}</MenuItem>)}
          </MenuList>
          <DocButtons>
            <PinButton aria-label="Float window"><DiamondIcon /></PinButton>
            <GhostButton aria-label="Minimize"><Art w={10} h={10}><path d="M2 7h6v2H2z" fill="#cfccbc" /></Art></GhostButton>
            <GhostButton aria-label="Restore"><Art w={10} h={10}><path d="M3 3V1h6v5H7M1 4h6v5H1zM1 5h6" stroke="#cfccbc" /></Art></GhostButton>
            <GhostButton aria-label="Close"><CrossIcon size={9} color="#cfccbc" /></GhostButton>
          </DocButtons>
        </MenuBar>

        <ToolBar $height={30}>
          <Grip />
          <ToolButton aria-label="New"><NewIcon /></ToolButton>
          <Divider />
          <ToolButton aria-label="Open"><OpenIcon /></ToolButton>
          <ToolButton aria-label="Save"><SaveIcon /></ToolButton>
          <ToolButton aria-label="Save all"><SaveAllIcon /></ToolButton>
          <Divider />
          <ToolButton $off aria-label="Cut"><CutIcon /></ToolButton>
          <ToolButton aria-label="Copy"><CopyIcon /></ToolButton>
          <ToolButton $off aria-label="Paste"><PasteIcon /></ToolButton>
          <Divider />
          <ToolButton $off aria-label="Undo"><UndoIcon /></ToolButton>
          <DropButton $off aria-label="Undo list"><DownTriangle /></DropButton>
          <ToolButton $off aria-label="Redo"><UndoIcon flip /></ToolButton>
          <DropButton $off aria-label="Redo list"><DownTriangle /></DropButton>
          <Divider />
          <ToolButton $on aria-label="Workspace"><BrowserPanelIcon /></ToolButton>
          <ToolButton $on aria-label="Tools"><HammerIcon /></ToolButton>
          <Divider />
          <ToolButton aria-label="Help"><HelpBookIcon /></ToolButton>
        </ToolBar>

        <ToolBar $height={30}>
          <Grip />
          <Combo label="Font" width={129} gap={2} off value="" />
          <Combo label="Font size" width={38} gap={1} off value="" />
          <Divider />
          <ToolButton $off><Glyph>B</Glyph></ToolButton>
          <ToolButton $off><Glyph $italic>I</Glyph></ToolButton>
          <ToolButton $off><Glyph $under>U</Glyph></ToolButton>
          <ToolButton $off aria-label="Font color"><FontColorIcon /></ToolButton>
          <Divider />
          <ToolButton $off aria-label="Align left"><AlignIcon lines={alignLeft} /></ToolButton>
          <ToolButton $off aria-label="Center"><AlignIcon lines={alignCenter} /></ToolButton>
          <ToolButton $off aria-label="Align right"><AlignIcon lines={alignRight} /></ToolButton>
          <Divider />
          <ToolButton $off aria-label="Bullets"><BulletIcon /></ToolButton>
        </ToolBar>

        <Work>
          <Side>
            <SideHead>
              <SideGrip />
              <TinyButton aria-label="Collapse"><DownTriangle /></TinyButton>
              <TinyButton aria-label="Close panel"><CrossIcon size={7} /></TinyButton>
            </SideHead>
            <SidePanel>
              <Drawers>
                {["Project", "Import", "Process", "Adjustment", "Export"].map((d) => <Drawer key={d}>{d}</Drawer>)}
                <DrawerBody>
                  <li><DrawerLink href="#upload"><UploadIcon />Upload Positions to External Device</DrawerLink></li>
                  <li><DrawerLink href="#export"><ExportIcon />Export Geo Data to File</DrawerLink></li>
                  <li><DrawerLink href="#report"><ReportIcon />Land Survey Report (F9)</DrawerLink></li>
                </DrawerBody>
                <Drawer>Map</Drawer>
                <Drawer>Utilities</Drawer>
              </Drawers>
            </SidePanel>
            <SideTab aria-label="Tasks">
              <Art w={5} h={14}><path d="M1 0h3v1h1v5H4v3H1V6H0V1h1zM1 10h3v1h1v2H4v1H1v-1H0v-2h1z" fill="#800000" /></Art>
            </SideTab>
          </Side>
          <ViewArea>
            <ViewFrame>
              <ViewWell>
                <SurveyMap />
              </ViewWell>
            </ViewFrame>
            <ViewTabs>
              <ViewTab $active><GlobeIcon />Survey View....</ViewTab>
              <ViewTab><PlanIcon />Time View</ViewTab>
            </ViewTabs>
          </ViewArea>
        </Work>

        <Splitter />
        <WorkbookWindow />
        <Splitter />

        <Log>
          <LogHandle>
            <TinyButton aria-label="Close output"><CrossIcon size={7} /></TinyButton>
            <TinyButton aria-label="Expand output"><Art w={4} h={7}><path d="M0 0v7l4-3.500z" fill="currentColor" /></Art></TinyButton>
            <LogGrip />
          </LogHandle>
          <LogWell>
            <LogText>
              <p>L1/L2 post-processing is unavailable in this version</p>
              <p>Process will continue using L1 data only</p>
              <p>(Please check About Box for available options) <b>Ok</b></p>
            </LogText>
            <VScroll before={1} after={0} thumb={8} />
          </LogWell>
        </Log>

        <ToolBar $height={31}>
          <Grip />
          <ToolButton $on aria-label="Select"><PointerIcon /></ToolButton>
          <ToolButton aria-label="Zoom in"><LensIcon kind="in" /></ToolButton>
          <ToolButton aria-label="Zoom out"><LensIcon kind="out" /></ToolButton>
          <ToolButton aria-label="Zoom to fit"><LensIcon kind="fit" /></ToolButton>
          <ToolButton aria-label="Pan"><HandIcon /></ToolButton>
          <ToolButton aria-label="Measure"><RulerIcon /></ToolButton>
          <Combo label="Scale" width={129} gap={1} value="1/150" />
          <Divider />
          <ToolButton aria-label="Clear"><CrossIcon size={9} weight={1} /></ToolButton>
        </ToolBar>

        <StatusBar>
          <StatusText>Ready</StatusText>
          <StatusPane $width={134} />
          <StatusPane $width={134} />
          <StatusPane $width={25} />
          <StatusPane $width={28}>NUM</StatusPane>
          <StatusPane $width={28} />
        </StatusBar>
      </Shell>
      <CustomFormat />
      <FieldFormat />
    </>
  );
}
